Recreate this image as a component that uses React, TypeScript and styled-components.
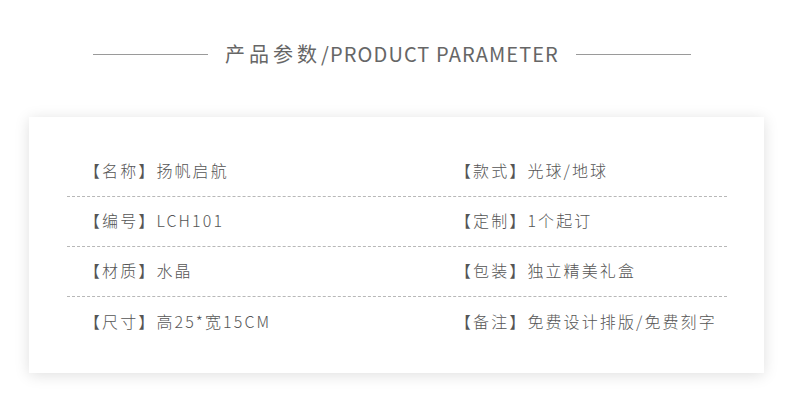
import React from "react";
import styled, { createGlobalStyle } from "styled-components";

const GlobalStyle = createGlobalStyle`
  html, body { margin: 0; padding: 0; background: #ffffff; }
  body { font-family: "Noto Sans CJK SC", "Noto Sans", sans-serif; }
`;

const Page = styled.div`
  width: 790px;
  height: 406px;
  box-sizing: border-box;
  padding: 37px 26px 0 29px;
  background: #ffffff;
`;

const Header = styled.div`
  display: flex;
  align-items: center;
  justify-content: center;
  gap: 17px;
  height: 34px;
  margin-left: -9px;
`;

const Rule = styled.div`
  width: 115px;
  height: 1px;
  background: #9a9a9a;
`;

const Title = styled.h1`
  margin: 0;
  font-size: 20px;
  font-weight: 400;
  color: #666666;
  letter-spacing: 1.1px;
  line-height: 34px;
  white-space: nowrap;
`;

const Cn = styled.span`
  letter-spacing: 4px;
`;

const Card = styled.div`
  margin-top: 46px;
  height: 256px;
  box-sizing: border-box;
  padding: 30px 37px 26px 38px;
  background: #ffffff;
  box-shadow: 0 2px 14px rgba(0, 0, 0, 0.13);
`;

const Row = styled.div<{ $last?: boolean }>`
  display: grid;
  grid-template-columns: 371px 1fr;
  align-items: center;
  height: 50px;
  box-sizing: border-box;
  padding-left: 17px;
  padding-bottom: 3px;
  border-bottom: ${(p) => (p.$last ? "none" : "1px dashed #b8b8b8")};
`;

const Cell = styled.div`
  font-size: 16px;
  font-weight: 300;
  color: #555555;
  letter-spacing: 2.1px;
  white-space: nowrap;
  line-height: 24px;
`;

const rows: [string, string][][] = [
  [
    ["【名称】", "扬帆启航"],
    ["【款式】", "光球/地球"],
  ],
  [
    ["【编号】", "LCH101"],
    ["【定制】", "1个起订"],
  ],
  [
    ["【材质】", "水晶"],
    ["【包装】", "独立精美礼盒"],
  ],
  [
    ["【尺寸】", "高25*宽15CM"],
    ["【备注】", "免费设计排版/免费刻字"],
  ],
];

export default function App() {
  return (
    <>
      <GlobalStyle />
      <Page>
        <Header>
          <Rule />
          <Title>
            <Cn>产品参数</Cn>/PRODUCT PARAMETER
          </Title>
          <Rule />
        </Header>
        <Card>
          {rows.map((r, i) => (
            <Row key={i} $last={i === rows.length - 1}>
              {r.map(([k, v]) => (
                <Cell key={k}>
                  {k}
                  {v}
                </Cell>
              ))}
            </Row>
          ))}
        </Card>
      </Page>
    </>
  );
}
